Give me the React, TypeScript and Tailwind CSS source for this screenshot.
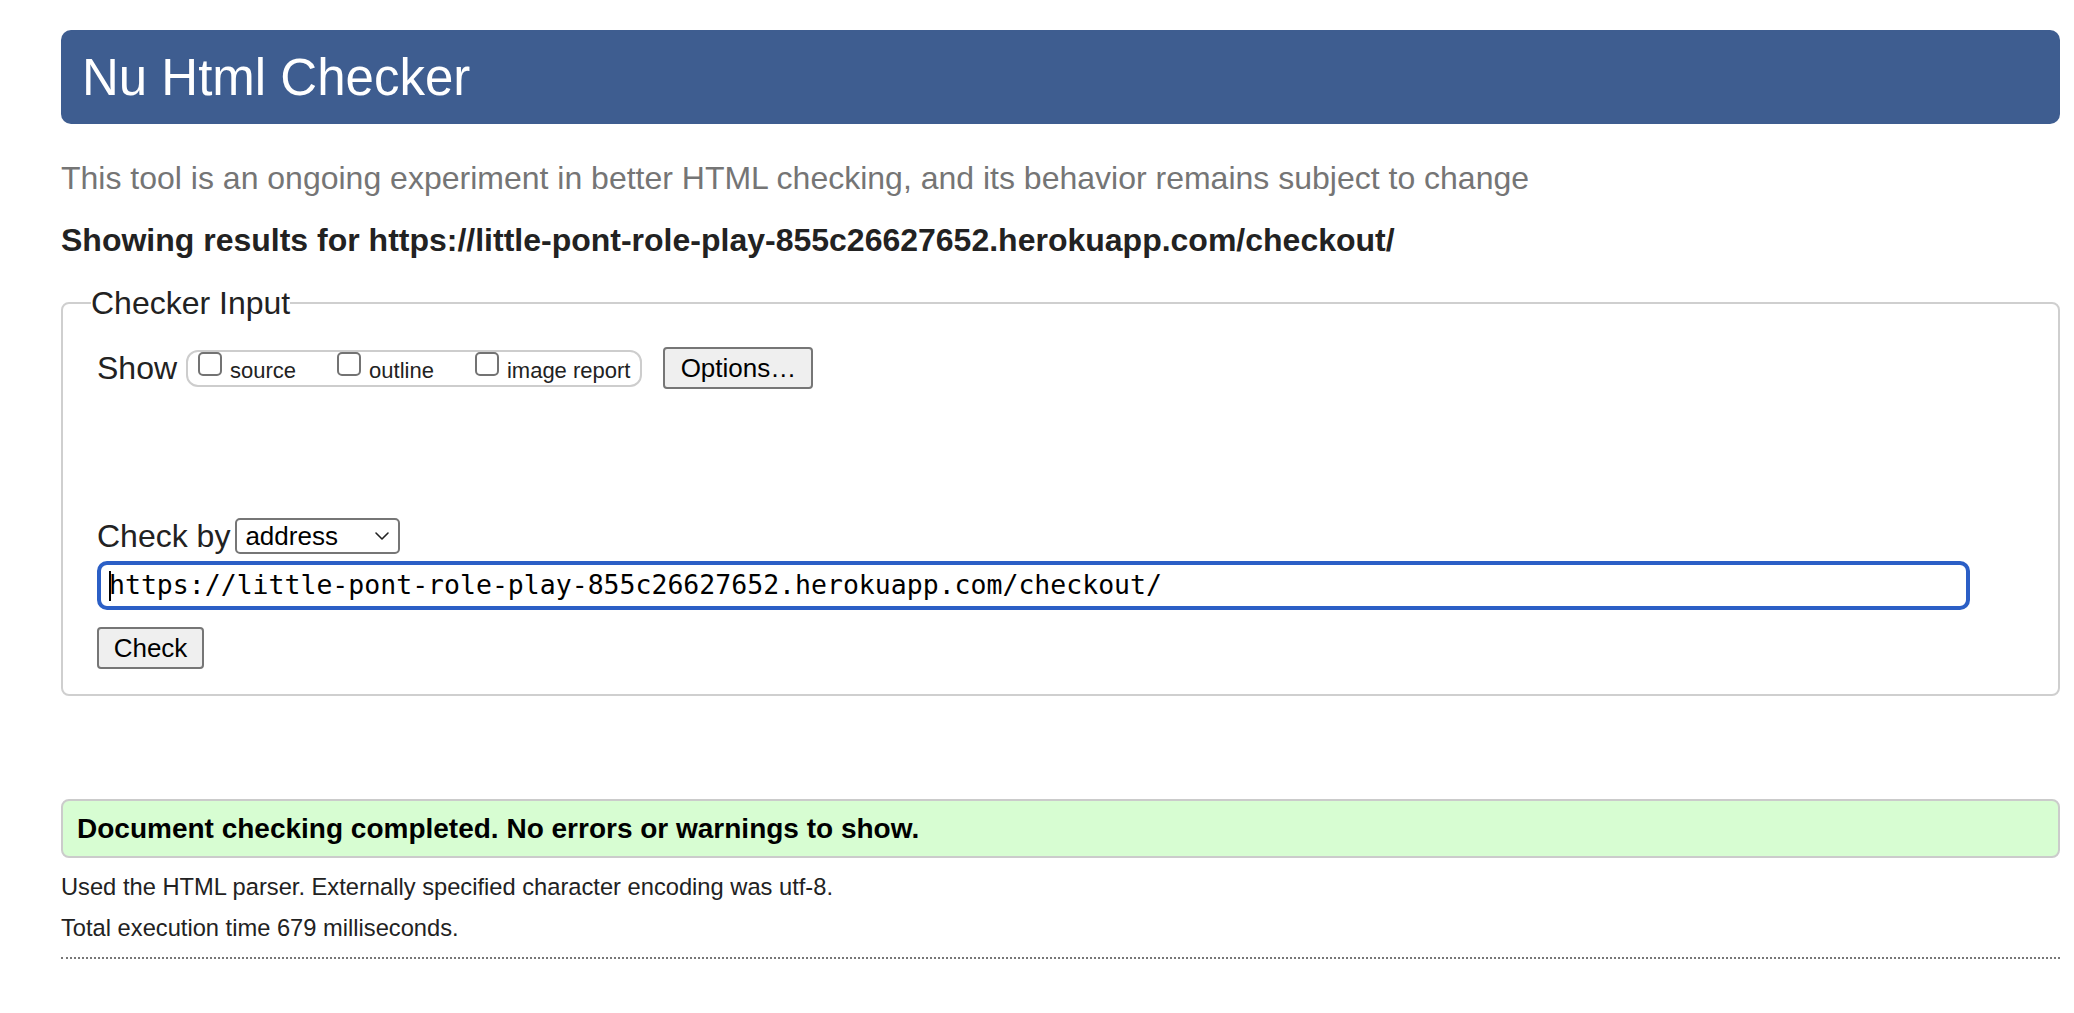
export default function App() {
  const url = "https://little-pont-role-play-855c26627652.herokuapp.com/checkout/";
  return (
    <div className="min-h-screen bg-white pl-[61px] pr-[14px] pt-[30px] text-[#222] [font-family:'Liberation_Sans',Arial,sans-serif]">
      <h1 className="flex h-[94px] items-center rounded-[10px] bg-[#3e5d90] pl-[21px] text-[51px] font-normal leading-none text-white">
        Nu Html Checker
      </h1>

      <p className="mt-[34px] text-[32px] leading-[40px] text-[#757575]">
        This tool is an ongoing experiment in better HTML checking, and its behavior remains subject to change
      </p>
      <p className="mt-[22px] text-[32px] font-bold leading-[40px] text-[#222]">
        Showing results for {url}
      </p>

      <fieldset className="mt-[23px] rounded-[8px] border-2 border-[#cfcfcf] pb-[25px] pl-[34px] pr-[34px]">
        <legend className="ml-[-6px] px-0 text-[32px] leading-[40px]">Checker Input</legend>

        <div className="mt-[24px] flex items-center">
          <span className="text-[32px] leading-[40px]">Show</span>
          <div className="ml-[9px] flex h-[37px] items-start gap-[41px] rounded-[12px] border-2 border-[#cdcdcd] pl-[10px] pr-[10px]">
            {["source", "outline", "image report"].map((l) => (
              <label key={l} className="flex items-start gap-[8px]">
                <span className="h-[24px] w-[24px] rounded-[5px] border-2 border-[#737373] bg-white" />
                <span className="mt-[8px] text-[22px] leading-[22px]">{l}</span>
              </label>
            ))}
          </div>
          <button className="ml-[21px] h-[42px] w-[150px] rounded-[4px] border-2 border-[#767676] bg-[#efefef] text-[26px] leading-none text-black">
            Options…
          </button>
        </div>

        <div className="mt-[127px] flex items-center gap-[5px]">
          <span className="text-[32px] leading-[40px]">Check by</span>
          <div className="flex h-[36px] w-[165px] items-center justify-between rounded-[5px] border-2 border-[#767676] pl-[8px] pr-[8px] text-[26px] leading-none text-black">
            <span>address</span>
            <svg width="16" height="10" viewBox="0 0 16 10" fill="none" stroke="#222" strokeWidth="1.6" strokeLinecap="round" strokeLinejoin="round">
              <path d="M2 2l6 6 6-6" />
            </svg>
          </div>
        </div>

        <div className="mt-[5px] flex h-[49px] w-[1873px] items-center rounded-[10px] border-[4px] border-[#2b5fc6] pl-[8px] [font-family:'DejaVu_Sans_Mono',monospace] text-[26.5px] leading-none text-black">
          <span className="h-[30px] w-[2px] bg-black" />
          <span className="-ml-[2px]">{url}</span>
        </div>

        <button className="mt-[17px] h-[42px] w-[107px] rounded-[4px] border-2 border-[#767676] bg-[#efefef] text-[26px] leading-none text-black">
          Check
        </button>
      </fieldset>

      <div className="mt-[103px] flex h-[59px] items-center rounded-[8px] border-2 border-[#cbcbcb] bg-[#d7fdd2] pl-[14px] text-[28px] font-bold text-black">
        Document checking completed. No errors or warnings to show.
      </div>

      <p className="mt-[14px] text-[23.7px] leading-[30px]">Used the HTML parser. Externally specified character encoding was utf-8.</p>
      <p className="mt-[11px] text-[23.7px] leading-[30px]">Total execution time 679 milliseconds.</p>

      <div className="mt-[14px] border-t-2 border-dotted border-[#777]" />
    </div>
  );
}
